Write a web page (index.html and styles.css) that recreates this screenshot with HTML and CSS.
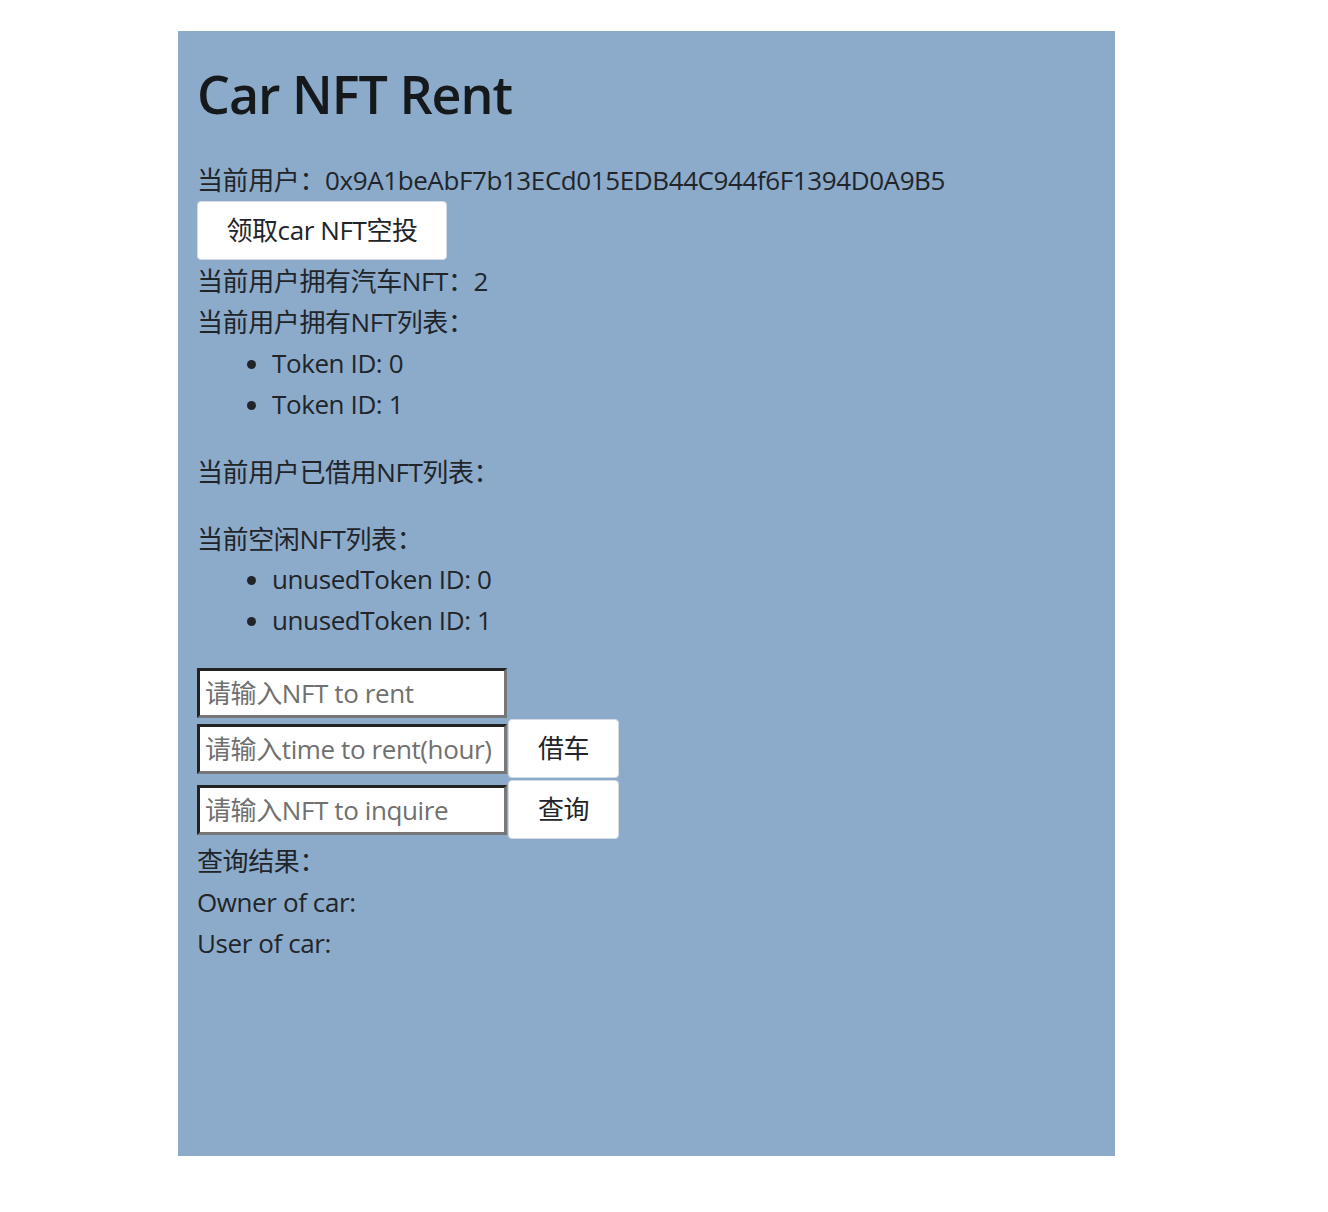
FILE: index.html
```html
<!DOCTYPE html>
<html lang="zh-CN">
<head>
<meta charset="utf-8">
<title>Car NFT Rent</title>
<link rel="stylesheet" href="styles.css">
</head>
<body>
<div class="app">
  <h1 class="title">Car NFT Rent</h1>
  <div class="line">当前用户：0x9A1beAbF7b13ECd015EDB44C944f6F1394D0A9B5</div>
  <button class="btn btn-airdrop">领取car NFT空投</button>
  <div class="line">当前用户拥有汽车NFT：2</div>
  <div class="line">当前用户拥有NFT列表：</div>
  <ul class="list">
    <li>Token ID: 0</li>
    <li>Token ID: 1</li>
  </ul>
  <div class="line">当前用户已借用NFT列表：</div>
  <ul class="list"></ul>
  <div class="line">当前空闲NFT列表：</div>
  <ul class="list">
    <li>unusedToken ID: 0</li>
    <li>unusedToken ID: 1</li>
  </ul>
  <div class="form">
    <div class="row"><input class="field" placeholder="请输入NFT to rent"></div>
    <div class="row"><input class="field" placeholder="请输入time to rent(hour)"><button class="btn btn-action">借车</button></div>
    <div class="row row-last"><input class="field" placeholder="请输入NFT to inquire"><button class="btn btn-action">查询</button></div>
  </div>
  <div class="line">查询结果：</div>
  <div class="line latin">Owner of car:</div>
  <div class="line latin">User of car:</div>
</div>
</body>
</html>
```
FILE: styles.css
```css
html, body {
  margin: 0;
  padding: 0;
  background: #ffffff;
}
body {
  font-family: "Open Sans", "Noto Sans CJK SC", sans-serif;
  font-size: 26px;
  letter-spacing: -0.4px;
  line-height: 41.2px;
  color: #212529;
}
.app {
  width: 937px;
  min-height: 1125px;
  margin: 31px 0 0 178px;
  padding: 0 19px;
  box-sizing: border-box;
  background: #8cabcb;
}
.title {
  margin: 0 0 30px 0;
  padding-top: 27px;
  font-size: 52px;
  line-height: 72px;
  font-weight: 600;
  letter-spacing: -1px;
  color: #16191c;
}
.line {
  margin: 0;
}
.latin {
  line-height: 38px;
  padding-bottom: 3px;
}
.btn {
  font-family: inherit;
  font-size: 26px;
  letter-spacing: -0.4px;
  line-height: 41.2px;
  color: #212529;
  background: #ffffff;
  border: 1px solid #d5dbe2;
  border-radius: 4px;
  padding: 0;
  margin: 0;
  cursor: pointer;
}
.btn-airdrop {
  display: block;
  width: 250px;
  height: 59px;
  margin-bottom: 1px;
}
.list {
  margin: 0 0 25.6px 0;
  padding-left: 75px;
}
.list li {
  line-height: 38.4px;
  padding-bottom: 3px;
}
.form {
  display: flex;
  flex-direction: column;
  gap: 1px;
  margin-bottom: 2px;
}
.row {
  display: flex;
  align-items: center;
}
.row-last {
  margin-top: 1px;
}
.field {
  width: 310px;
  height: 50px;
  box-sizing: border-box;
  border: 3px solid;
  border-color: #222222 #777777 #777777 #222222;
  font-family: inherit;
  font-size: 26px;
  letter-spacing: -0.4px;
  padding: 0 5px;
  margin: 0;
  background: #ffffff;
  color: #212529;
}
.field::placeholder {
  color: #707070;
  opacity: 1;
}
.btn-action {
  width: 111px;
  height: 59px;
  margin-left: 1px;
}
```
